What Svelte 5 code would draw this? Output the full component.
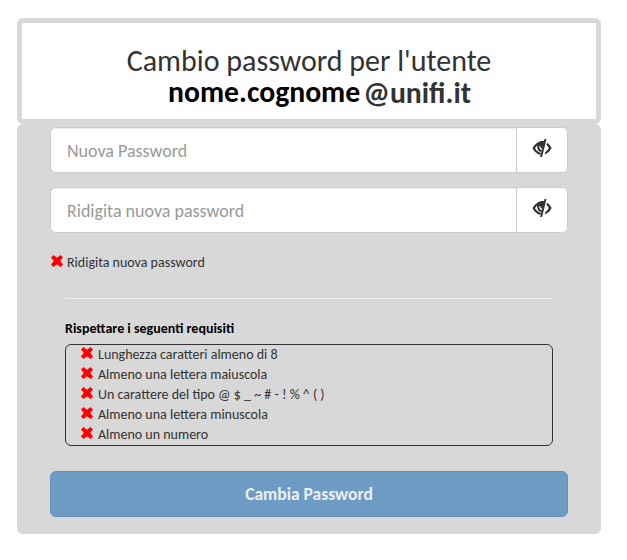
<script>
  const requisiti = [
    'Lunghezza caratteri almeno di 8',
    'Almeno una lettera maiuscola',
    'Un carattere del tipo @ $ _ ~ # - ! % ^ ( )',
    'Almeno una lettera minuscola',
    'Almeno un numero'
  ];

  const campi = [
    { id: 'password1', label: 'Nuova Password' },
    { id: 'password2', label: 'Ridigita nuova password' }
  ];

  let visibili = $state({ password1: false, password2: false });

  function toggle(id) {
    visibili[id] = !visibili[id];
  }
</script>

{#snippet croce()}
  <svg class="croce" viewBox="0 0 12 12" aria-hidden="true">
    <path d="M2.5 0 6 2.8 9.5 0 12 2.5 9.2 6 12 9.5 9.5 12 6 9.2 2.5 12 0 9.5 2.8 6 0 2.5Z" />
  </svg>
{/snippet}

<main>
  <header class="intestazione">
    <h2>
      <span class="titolo">Cambio password per l'utente</span>
      <span class="utente"><b class="nome">nome.cognome</b><b class="dominio">@unifi.it</b></span>
    </h2>
  </header>

  <form class="pannello" onsubmit={(e) => e.preventDefault()}>
    {#each campi as campo}
      <div class="input-group">
        <input
          type={visibili[campo.id] ? 'text' : 'password'}
          placeholder={campo.label}
          aria-label={campo.label}
        />
        <button type="button" class="addon" aria-label="Mostra password" onclick={() => toggle(campo.id)}>
          <svg class="occhio" viewBox="0 0 20 20" aria-hidden="true">
            <path d="M13.2 3.3C8 2.2 3.4 5 0.5 10.2 2.6 14.2 5.4 16.3 8.5 16.8L9 15C6.6 14.3 4.6 12.7 3 10.2 3.7 9 4.4 8.2 5.2 7.5 4.9 10.9 6.4 13.8 9.4 14.1L9.9 12.2C8 11.7 7.1 10.3 7.3 8.2L8.2 7.8C8.2 9.4 9 10.5 10.3 10.7Z" />
            <path d="M12.5 1H14.5L10.1 19H8.1Z" />
            <path d="M15.1 4.7C17 6 18.5 7.8 19.6 10.1 18 13.2 15.9 15.4 12.7 16.5L13.3 14.1C14.8 13.2 15.9 11.9 16.8 10.1 16.1 8.7 15.4 7.7 14.4 7Z" />
          </svg>
        </button>
      </div>
    {/each}

    <p class="esito">{@render croce()}<span>Ridigita nuova password</span></p>

    <section class="requisiti">
      <hr />
      <h3>Rispettare i seguenti requisiti</h3>
      <ul>
        {#each requisiti as requisito}
          <li>{@render croce()}<span>{requisito}</span></li>
        {/each}
      </ul>
    </section>

    <button class="invia" disabled>Cambia Password</button>
  </form>
</main>

<style>
  :global(body) {
    background: #fff;
    font-family: Calibri, Carlito, Lato, sans-serif;
    color: #333;
  }

  main {
    width: 601px;
    padding: 18px 0 0 17px;
  }

  main, main * {
    box-sizing: border-box;
  }

  .intestazione {
    height: 106px;
    padding-top: 20px;
    border: 5px solid #d8d8d8;
    border-radius: 6px;
  }

  h2 {
    display: flex;
    flex-direction: column;
    align-items: center;
    margin: 0;
    font-size: 30px;
    font-weight: 400;
    white-space: nowrap;
  }

  .titolo {
    line-height: 35px;
  }

  .utente {
    display: flex;
    gap: 3px;
    padding-left: 21px;
    font-size: 29.7px;
    line-height: 29px;
  }

  .nome {
    color: #000;
  }

  .dominio {
    padding-top: 1px;
  }

  .pannello {
    height: 410px;
    padding: 3px 33px 0;
    background: #d8d8d8;
    border-radius: 6px;
  }

  .input-group {
    display: flex;
    height: 46px;
    margin-bottom: 14px;
    border: 1px solid #ccc;
    border-radius: 6px;
    background: #fff;
    overflow: hidden;
  }

  input {
    flex: 1;
    min-width: 0;
    padding: 2px 16px 0;
    border: 0;
    outline: 0;
    background: transparent;
    box-shadow: inset 0 1px 1px rgba(0, 0, 0, 0.075);
    color: #555;
    font: 18px Calibri, Carlito, Lato, sans-serif;
  }

  input::placeholder {
    color: #999;
    opacity: 1;
  }

  .addon {
    display: flex;
    justify-content: center;
    width: 51px;
    padding: 10px 0 0;
    border: 0;
    border-left: 1px solid #ccc;
    background: #fff;
    cursor: pointer;
  }

  .occhio {
    width: 20px;
    height: 20px;
    fill: #333;
  }

  .croce {
    flex: none;
    width: 12px;
    height: 12px;
    margin-bottom: 2px;
    fill: #f00;
  }

  .esito {
    display: flex;
    align-items: center;
    gap: 4px;
    height: 20px;
    margin: 19px 0 0;
    padding-left: 1px;
    font-size: 14px;
    white-space: nowrap;
  }

  .requisiti {
    padding: 0 15px;
  }

  hr {
    height: 1px;
    margin: 26px 0 20px;
    border: 0;
    background: #eee;
  }

  h3 {
    margin: 0 0 5px;
    color: #000;
    font-size: 14px;
    font-weight: 700;
    line-height: 20px;
    white-space: nowrap;
  }

  ul {
    height: 102px;
    margin: 0;
    padding: 0 0 0 15px;
    list-style: none;
    border: 1px solid #333;
    border-radius: 6px;
  }

  li {
    display: flex;
    align-items: center;
    gap: 5px;
    height: 20px;
    font-size: 14px;
    line-height: 20px;
    white-space: nowrap;
  }

  li .croce, li :global(.croce) {
    margin-bottom: 4px;
  }

  .invia {
    display: block;
    width: 100%;
    height: 46px;
    margin-top: 25px;
    padding: 0;
    border: 1px solid #6491ba;
    border-radius: 6px;
    background: #6e9bc3;
    color: #eceff2;
    font: 700 17.5px Calibri, Carlito, Lato, sans-serif;
  }
</style>
